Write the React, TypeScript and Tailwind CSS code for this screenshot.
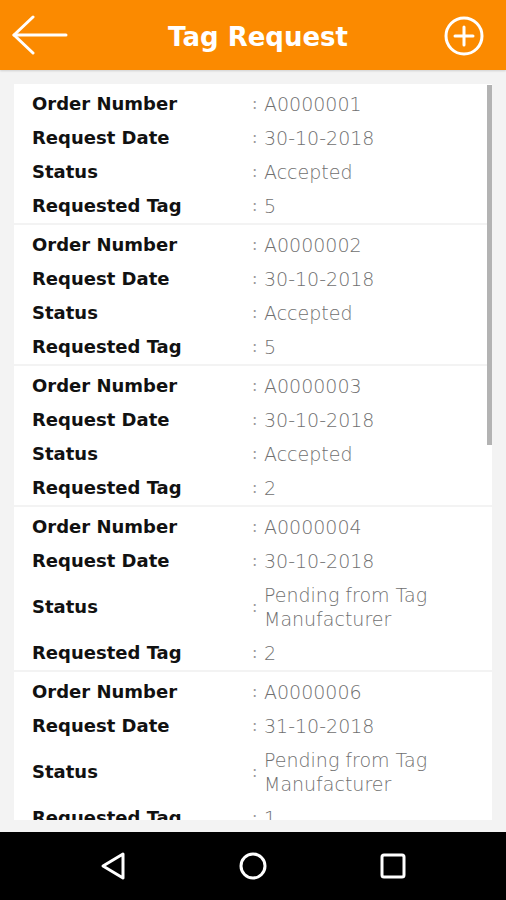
import React from "react";

type Order = {
  number: string;
  date: string;
  status: string;
  tags: string;
};

const orders: Order[] = [
  { number: "A0000001", date: "30-10-2018", status: "Accepted", tags: "5" },
  { number: "A0000002", date: "30-10-2018", status: "Accepted", tags: "5" },
  { number: "A0000003", date: "30-10-2018", status: "Accepted", tags: "2" },
  { number: "A0000004", date: "30-10-2018", status: "Pending from Tag Manufacturer", tags: "2" },
  { number: "A0000006", date: "31-10-2018", status: "Pending from Tag Manufacturer", tags: "1" },
];

function Row({ label, value }: { label: string; value: string }) {
  return (
    <div className="grid grid-cols-[220px_12px_1fr] items-center py-[5px] leading-[24px]">
      <span className="text-[18px] font-bold text-[#111]">{label}</span>
      <span className="text-[16px] text-[#9a9a9a]">:</span>
      <span className="pr-[14px] text-[19px] font-extralight text-[#707070]">{value}</span>
    </div>
  );
}

function OrderCard({ order }: { order: Order }) {
  return (
    <div className="shrink-0 bg-white pl-[18px] pt-[3px]">
      <Row label="Order Number" value={order.number} />
      <Row label="Request Date" value={order.date} />
      <Row label="Status" value={order.status} />
      <Row label="Requested Tag" value={order.tags} />
    </div>
  );
}

export default function App() {
  return (
    <div className="flex h-[900px] w-[506px] flex-col overflow-hidden bg-[#f3f3f3] font-['DejaVu_Sans',sans-serif]">
      <header className="relative z-10 flex h-[70px] shrink-0 items-center justify-between bg-[#fb8a00] pl-[12px] pr-[20px] shadow-[0_1px_2px_rgba(0,0,0,0.15)]">
        <svg width="56" height="40" viewBox="0 0 56 40" fill="none" stroke="white" strokeWidth="3" strokeLinecap="round" strokeLinejoin="round">
          <path d="M2 20 H54" />
          <path d="M21 2 L2 20 L21 38" />
        </svg>
        <h1 className="ml-[6px] pt-[4px] text-[26px] font-bold text-white">Tag Request</h1>
        <svg className="mt-[2px]" width="44" height="44" viewBox="0 0 44 44" fill="none" stroke="white" strokeWidth="3" strokeLinecap="round">
          <circle cx="22" cy="22" r="18" />
          <path d="M22 13 V31 M13 22 H31" />
        </svg>
      </header>

      <main className="flex-1 overflow-hidden px-[14px] pb-[12px] pt-[14px]">
        <div className="relative flex h-full flex-col gap-[2px] overflow-hidden">
          {orders.map((o) => (
            <OrderCard key={o.number} order={o} />
          ))}
          <div className="absolute right-0 top-[1px] h-[360px] w-[5px] bg-[#b3b3b3]" />
        </div>
      </main>

      <nav className="grid h-[68px] shrink-0 grid-cols-[140px_140px_140px] items-center justify-center bg-black">
        <svg className="justify-self-center" width="28" height="30" viewBox="0 0 28 30" fill="none" stroke="white" strokeWidth="3" strokeLinejoin="round">
          <path d="M24 3 L4 15 L24 27 Z" />
        </svg>
        <svg className="justify-self-center" width="30" height="30" viewBox="0 0 30 30" fill="none" stroke="white" strokeWidth="3">
          <circle cx="15" cy="15" r="12" />
        </svg>
        <svg className="justify-self-center" width="28" height="28" viewBox="0 0 28 28" fill="none" stroke="white" strokeWidth="3" strokeLinejoin="round">
          <rect x="3" y="3" width="22" height="22" rx="2" />
        </svg>
      </nav>
    </div>
  );
}
